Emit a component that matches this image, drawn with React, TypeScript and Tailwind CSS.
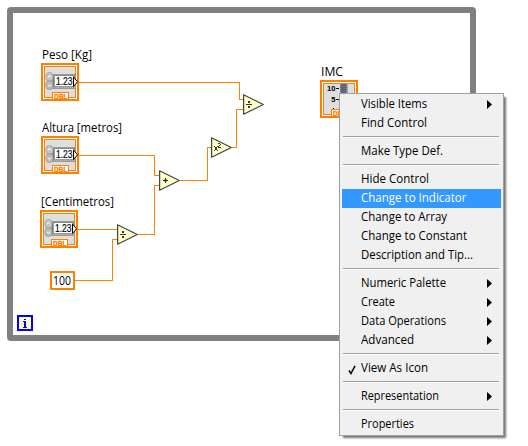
const ORANGE = '#ff8000';
const UI = "font-['Open_Sans','Noto_Sans',sans-serif]";

function DblTag() {
  return (
    <g>
      <path d="M11 36H28V30H11Z" fill="#fff" />
      <path d="M11.5 36V29.5H27.5V36" fill="#fff" stroke={ORANGE} shapeRendering="crispEdges" />
      <text x="13" y="36" fontSize="7.5" fontWeight="bold" fontFamily="Liberation Sans, sans-serif" fill={ORANGE} stroke={ORANGE} strokeWidth=".35" textLength="13.5" lengthAdjust="spacingAndGlyphs">DBL</text>
    </g>
  );
}

function TerminalFrame() {
  return (
    <g shapeRendering="crispEdges">
      <rect width="38" height="38" fill={ORANGE} />
      <rect x="2" y="2" width="34" height="34" fill="#fff" />
      <rect x="3" y="3" width="32" height="32" fill={ORANGE} />
      <rect x="4" y="4" width="30" height="30" fill="#dedede" />
    </g>
  );
}

function NumericTerminal({ x, y }: { x: number; y: number }) {
  return (
    <g transform={`translate(${x} ${y})`}>
      <TerminalFrame />
      <g shapeRendering="crispEdges">
        <rect x="11" y="11" width="23" height="15" fill="#9a9a9a" />
        <path d="M13 12.5H34" stroke="#7c7c7c" strokeDasharray="1 1" />
        <path d="M13 24.5H34" stroke="#b8b8b8" strokeDasharray="1 1" />
        <path d="M12.5 13V24" stroke="#777" />
      </g>
      <rect x="5" y="9.5" width="7" height="8.5" rx="3.2" fill="#c4c4c4" stroke="#a0a0a0" strokeWidth=".8" />
      <rect x="5" y="18" width="7" height="8.5" rx="3.2" fill="#bcbcbc" stroke="#949494" strokeWidth=".8" />
      <path d="M7 14.3l1.5-1.8 1.5 1.8M7 21.7l1.5 1.8 1.5-1.8" fill="none" stroke="#fff" />
      <rect x="14" y="13" width="18" height="10" fill="#fff" />
      <text x="15" y="22" fontSize="10" fontFamily="Liberation Sans, sans-serif" fill="#000" stroke="#000" strokeWidth=".15" textLength="16.5" lengthAdjust="spacingAndGlyphs">1.23</text>
      <path d="M32.5 14V23.5L36.5 18.8Z" fill="#fff" stroke="#000" />
      <DblTag />
    </g>
  );
}

function SliderTerminal() {
  return (
    <g transform="translate(320 80)">
      <TerminalFrame />
      <g fontSize="7.5" fontWeight="bold" fontFamily="Liberation Sans, sans-serif" fill="#000">
        <text x="7" y="11" textLength="8.5" lengthAdjust="spacingAndGlyphs">10</text>
        <text x="11.2" y="22">5</text>
      </g>
      <path d="M16 8.5H19M16 19.5H19M13 28.5H14" stroke="#000" shapeRendering="crispEdges" />
      <rect x="20" y="4" width="7.5" height="27" rx="1.5" fill="#666477" />
      <path d="M20.5 6V28M26.5 6V28" stroke="#9b99ab" strokeDasharray="1 1" />
      <DblTag />
    </g>
  );
}

function Triangle({ x, y, op }: { x: number; y: number; op: 'div' | 'add' | 'sq' }) {
  return (
    <g transform={`translate(${x} ${y})`}>
      <path d="M.6 .8V20.2L20.3 10.5Z" fill="#ffffce" stroke="#45453d" strokeWidth="1.25" strokeLinejoin="round" />
      <g fill="#383830" shapeRendering="crispEdges">
        {op === 'div' && <path d="M3 10H9V11H3ZM5 7H7V9H5ZM5 12H7V14H5Z" />}
        {op === 'add' && <path d="M4 10H9V11H4ZM6 8H7V13H6Z" />}
        {op === 'add' && <path d="M5 9H8V12H5Z" opacity=".45" />}
      </g>
      {op === 'sq' && (
        <path
          d="M3 9.5H4M6 9.5H7M4 10.5H6M4 11.5H6M4 12.5H6M3 13.5H4M6 13.5H7M7 6.5H9M9 7.5H10M8 8.5H9M7 9.5H8M7 10.5H10"
          stroke="#383830" shapeRendering="crispEdges"
        />
      )}
    </g>
  );
}

function Label({ x, y, width, children }: { x: number; y: number; width: number; children: string }) {
  return (
    <text x={x} y={y} fontSize="12" fill="#000" textLength={width} lengthAdjust="spacingAndGlyphs" className={UI}>
      {children}
    </text>
  );
}

function Diagram() {
  return (
    <svg width="528" height="446" viewBox="0 0 528 446" className="block">
      <rect x="10" y="10" width="463" height="328" rx="1" fill="#fff" stroke="#808080" strokeWidth="6" strokeLinejoin="round" />
      <path
        d="M79 82.5H239.5V99.5H243M232 147.5H236.5V109.5H243M79 155.5H154.5V175.5H159M138 234.5H154.5V185.5H159M180 180.5H207.5V147.5H211M78 229.5H117M75 280.5H112.5V239.5H117"
        fill="none" stroke={ORANGE} shapeRendering="crispEdges"
      />
      <Label x={42} y={59} width={50}>Peso [Kg]</Label>
      <Label x={42} y={132} width={80}>Altura [metros]</Label>
      <Label x={41} y={206} width={73}>[Centimetros]</Label>
      <Label x={321} y={76} width={22}>IMC</Label>
      <NumericTerminal x={41} y={63} />
      <NumericTerminal x={41} y={136} />
      <NumericTerminal x={40} y={210} />
      <SliderTerminal />
      <Triangle x={243} y={94} op="div" />
      <Triangle x={211} y={137} op="sq" />
      <Triangle x={159} y={170} op="add" />
      <Triangle x={117} y={224} op="div" />
      <rect x="51" y="272" width="23" height="17" fill="#fff" stroke={ORANGE} strokeWidth="2" />
      <Label x={53} y={285} width={18}>100</Label>
      <rect x="18" y="316" width="14" height="14" fill="#ffffce" stroke="#00f" strokeWidth="2" />
      <path d="M24 319H26V320H24ZM24 321H26V328H24Z" fill="#00f" shapeRendering="crispEdges" />
      <path d="M23 321H24V322H23ZM23 327H27V328H23Z" fill="#00f" shapeRendering="crispEdges" />
    </svg>
  );
}

type Item = { label: string; width: number; sub?: boolean; active?: boolean; checked?: boolean };

const groups: Item[][] = [
  [{ label: 'Visible Items', width: 66, sub: true }, { label: 'Find Control', width: 66 }],
  [{ label: 'Make Type Def.', width: 82 }],
  [
    { label: 'Hide Control', width: 68 },
    { label: 'Change to Indicator', width: 105.5, active: true },
    { label: 'Change to Array', width: 86 },
    { label: 'Change to Constant', width: 106 },
    { label: 'Description and Tip...', width: 112 },
  ],
  [
    { label: 'Numeric Palette', width: 85, sub: true },
    { label: 'Create', width: 34, sub: true },
    { label: 'Data Operations', width: 85, sub: true },
    { label: 'Advanced', width: 53, sub: true },
  ],
  [{ label: 'View As Icon', width: 67, checked: true }],
  [{ label: 'Representation', width: 78, sub: true }],
  [{ label: 'Properties', width: 53 }],
];

function MenuItem({ label, width, sub, active, checked }: Item) {
  return (
    <div className={`mx-0.5 flex h-[19px] items-center ${active ? 'bg-[#3399ff]' : ''}`}>
      <div className="flex w-[19px] shrink-0 pl-1.5">
        {checked && (
          <svg width="8" height="10" viewBox="0 0 8 10" className="mt-0.5">
            <path d="M1 5.5L3 8.5L7 .8" fill="none" stroke="#000" strokeWidth="1.5" />
          </svg>
        )}
      </div>
      <svg width="120" height="19" className="shrink-0">
        <text x="0" y="13" fontSize="12" textLength={width} lengthAdjust="spacingAndGlyphs" fill={active ? '#fff' : '#000'} className={UI}>
          {label}
        </text>
      </svg>
      {sub && (
        <svg width="5" height="9" viewBox="0 0 5 9" className="ml-[6px]">
          <path d="M0 0L5 4.5L0 9Z" fill="#000" />
        </svg>
      )}
    </div>
  );
}

export default function App() {
  return (
    <div className="relative h-[446px] w-[528px] overflow-hidden bg-white">
      <Diagram />
      <div className="absolute top-[93px] left-[339px] h-[343px] w-[165px] border border-[#a0a0a0] bg-[#f0f0f0] pt-px shadow-[3px_3px_2px_-1px_rgba(0,0,0,0.55)]">
        {groups.map((items, g) => (
          <div key={items[0].label}>
            {g > 0 && <div className="mr-1 ml-[3px] h-[9px] pt-[3px]"><div className="h-0.5 border-t border-b border-t-[#a0a0a0] border-b-white" /></div>}
            {items.map((item) => <MenuItem key={item.label} {...item} />)}
          </div>
        ))}
      </div>
    </div>
  );
}
